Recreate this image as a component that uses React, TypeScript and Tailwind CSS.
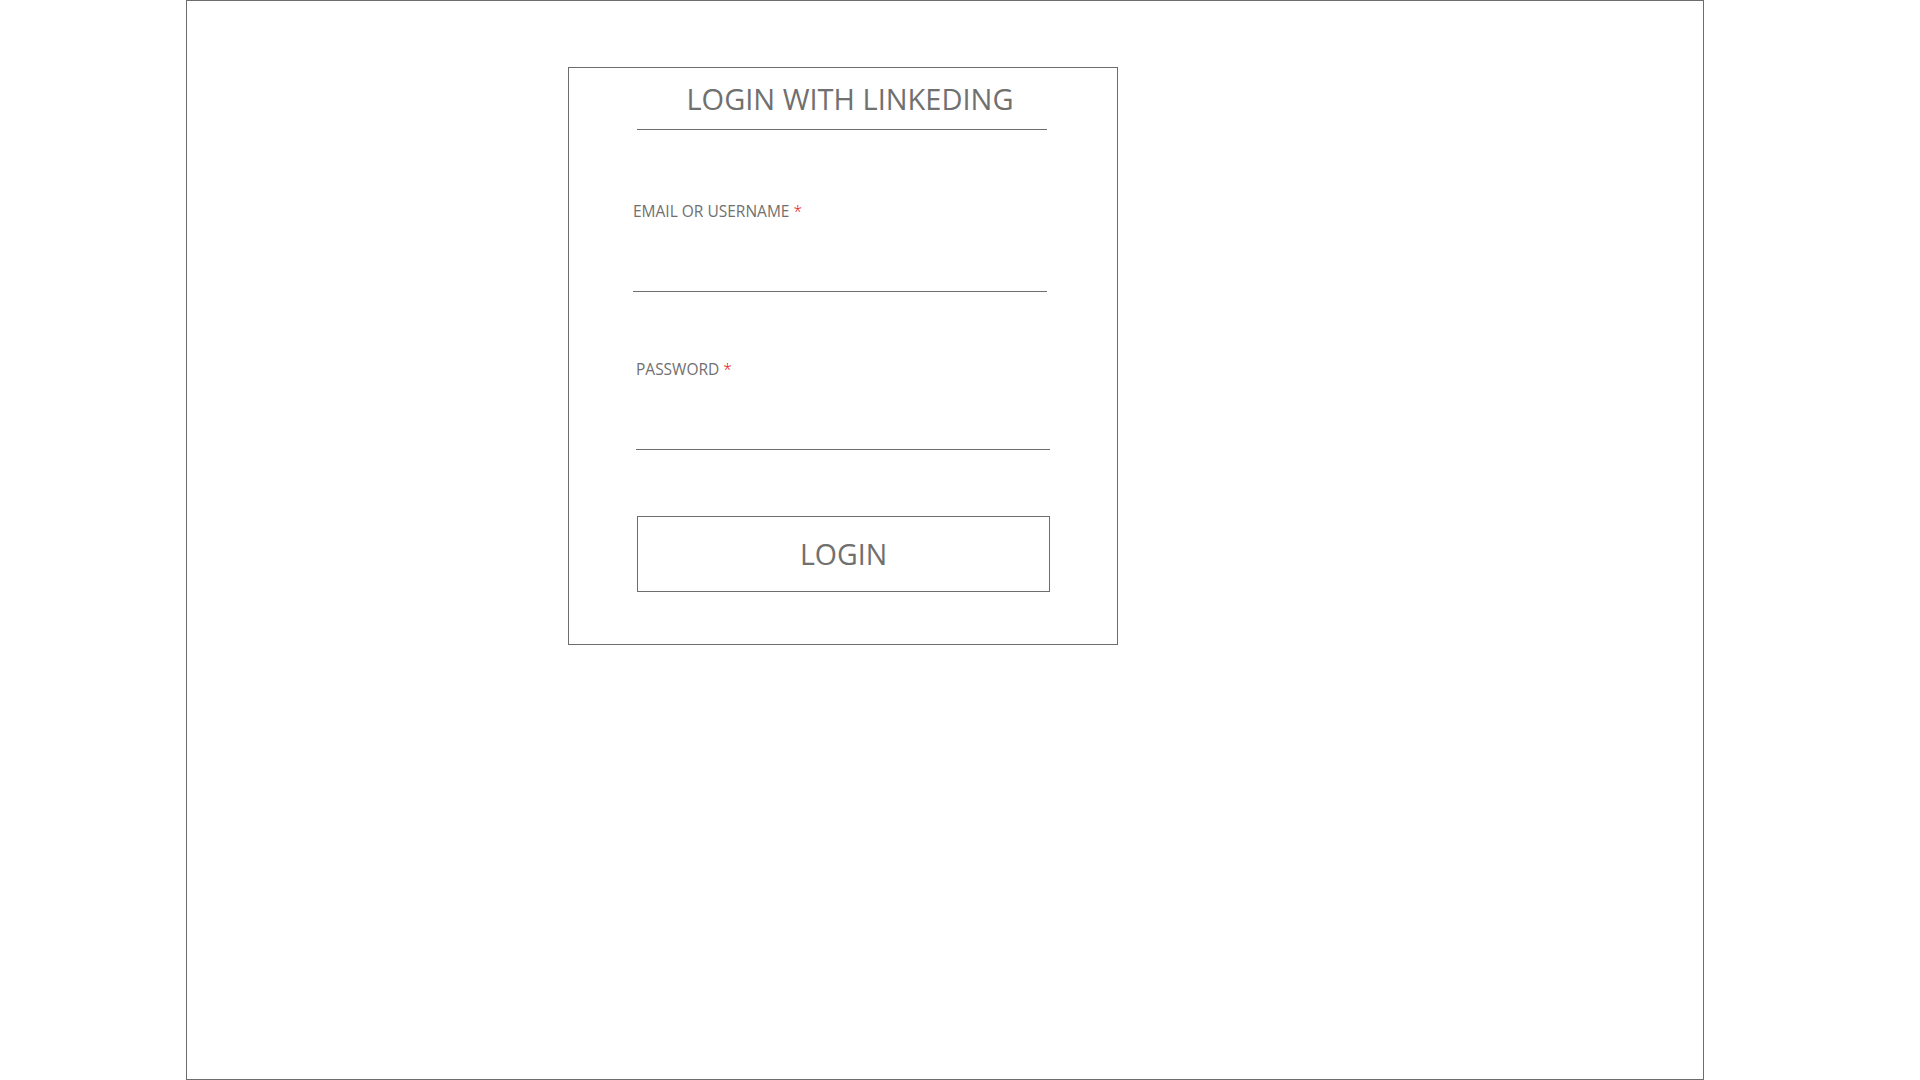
export default function App() {
  return (
    <div className="w-[1920px] h-[1080px] bg-white font-['Open_Sans',sans-serif] text-[#707070]">
      <div className="ml-[186px] w-[1518px] h-[1080px] border border-[#6d6d6d] pl-[381px] pt-[66px]">
        {/* Login card */}
        <div className="w-[550px] h-[578px] border border-[#6d6d6d] flex flex-col">
          {/* Titulo */}
          <div className="ml-[68px] w-[410px] mt-[11px] pb-[10px] pl-4 border-b border-[#6d6d6d] text-center">
            <h1 className="text-[29px] leading-[40px] font-normal">LOGIN WITH LINKEDING</h1>
          </div>

          {/* Email */}
          <label className="ml-[64px] mt-[69px] text-[15.5px] leading-[24px]">
            EMAIL OR USERNAME <span className="text-[#e00000] font-light">*</span>
          </label>
          <input
            type="text"
            className="ml-[64px] w-[414px] h-[69px] border-b border-[#6d6d6d] outline-none bg-transparent"
          />

          {/* Password */}
          <label className="ml-[67px] mt-[65px] text-[15.5px] leading-[24px]">
            PASSWORD <span className="text-[#e00000] font-light">*</span>
          </label>
          <input
            type="password"
            className="ml-[67px] w-[414px] h-[69px] border-b border-[#6d6d6d] outline-none bg-transparent"
          />

          {/* Botao */}
          <button
            type="button"
            className="ml-[68px] mt-[66px] w-[413px] h-[76px] border border-[#6d6d6d] text-[28.5px] leading-none"
          >
            LOGIN
          </button>
        </div>
      </div>
    </div>
  );
}
